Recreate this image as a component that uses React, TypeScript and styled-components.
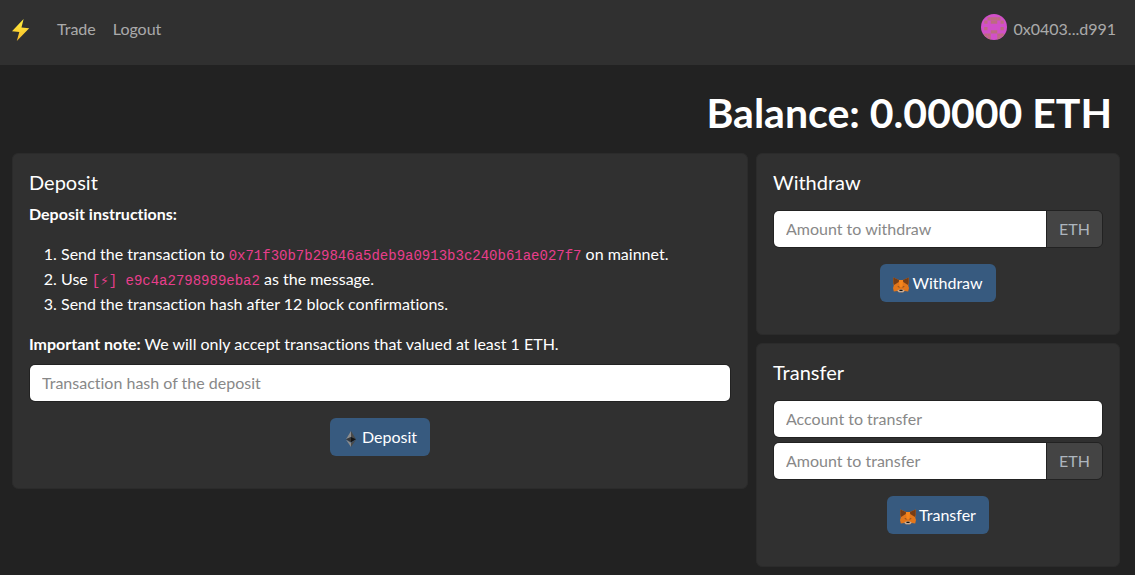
import React, { useId } from 'react';
import styled, { createGlobalStyle } from 'styled-components';

const GlobalStyle = createGlobalStyle`
  *, *::before, *::after { box-sizing: border-box; }
  body {
    margin: 0;
    background: #222;
    color: #fff;
    font-family: Lato, "Liberation Sans", sans-serif;
    font-size: 16px;
    font-variant-ligatures: none;
    line-height: 24px;
  }
`;

const Navbar = styled.nav`
  display: flex;
  align-items: flex-start;
  gap: 27px;
  min-height: 65px;
  padding: 16px 19px 16px 12px;
  background: #303030;
`;

const Brand = styled.a`
  display: flex;
  padding-top: 2px;
  text-decoration: none;
`;

const NavLinks = styled.div`
  display: flex;
  flex: 1;
  gap: 17px;
`;

const NavLink = styled.a`
  color: rgba(255, 255, 255, 0.6);
  line-height: 26px;
  text-decoration: none;
`;

const Account = styled(NavLink)`
  display: flex;
  gap: 7px;

  svg { margin-top: -2px; }
`;

const Page = styled.main`
  padding: 24px 11px 8px 8px;
`;

const Balance = styled.h1`
  margin: 0 12px 16px 0;
  font-size: 41px;
  font-weight: 700;
  line-height: 48px;
  text-align: right;
`;

const Columns = styled.div`
  display: grid;
  grid-template-columns: minmax(0, 2fr) minmax(0, 1fr);
  align-items: start;
`;

const Column = styled.div`
  display: flex;
  flex-direction: column;
  gap: 8px;
  padding: 0 4px;
`;

const Card = styled.section`
  padding: 16px 16px 32px;
  border: 1px solid #2b2b2b;
  border-radius: 6px;
  background: #303030;
`;

const CardTitle = styled.h2`
  margin: 0 0 8px;
  font-size: 20px;
  font-weight: 400;
  line-height: 24px;
`;

const Text = styled.p`
  margin: 0;
`;

const Steps = styled.ol`
  margin: 15px 0 16px;
  padding-left: 32px;
  line-height: 25px;
`;

const Code = styled.code`
  color: #e83e8c;
  font-family: "Liberation Mono", monospace;
  font-size: 14px;
  line-height: 16px;
`;

const Form = styled.form`
  display: flex;
  flex-direction: column;
  gap: 4px;
  padding-top: 8px;
`;

const Field = styled.div`
  display: flex;
  overflow: hidden;
  border: 1px solid #222;
  border-radius: 6px;
`;

const Input = styled.input`
  flex: 1;
  min-width: 0;
  height: 36px;
  padding: 0 12px 2px;
  border: 0;
  background: #fff;
  color: #303030;
  font: inherit;
  font-variant-ligatures: none;

  &::placeholder { color: #888; opacity: 1; }
`;

const Unit = styled.label`
  padding: 6px 12px;
  border-left: 1px solid #222;
  background: #444;
  color: #adb5bd;
`;

const Button = styled.button`
  display: flex;
  align-items: center;
  align-self: center;
  gap: 3px;
  height: 38px;
  margin-top: 12px;
  padding: 0 13px;
  border: 0;
  border-radius: 6px;
  background: #375a7f;
  color: #fff;
  font: inherit;
  font-variant-ligatures: none;

  svg { margin-top: 4px; }
`;

const Bolt = () => (
  <svg width="18" height="24" viewBox="0 0 18 24" aria-hidden="true">
    <defs>
      <linearGradient id="bolt" x1="0" y1="0" x2="0" y2="1">
        <stop offset="0" stopColor="#fff23e" />
        <stop offset="1" stopColor="#f9b92a" />
      </linearGradient>
    </defs>
    <path d="M11.600 1 0 13.200 7.300 13.900 4.800 23 17.200 10.300 9.500 9.600Z" fill="url(#bolt)" />
  </svg>
);

const identicon = [
  '........',
  '..BBBB..',
  '.B.BB.B.',
  '........',
  '.B....B.',
  '...BB...',
  '.BB..BB.',
  '..B..B..',
];

const Avatar = () => (
  <svg width="26" height="26" viewBox="0 0 8 8" aria-hidden="true">
    <clipPath id="avatar"><circle cx="4" cy="4" r="4" /></clipPath>
    <g clipPath="url(#avatar)">
      <rect width="8" height="8" fill="#d150c8" />
      {identicon.flatMap((row, y) =>
        [...row].map((cell, x) =>
          cell === 'B' ? <rect key={`${x}-${y}`} x={x} y={y} width="1" height="1" fill="#bd6b80" /> : null,
        ),
      )}
    </g>
  </svg>
);

const Ether = () => (
  <svg width="16" height="16" viewBox="0 0 16 16" aria-hidden="true">
    <path d="M8 0 3 8.200 8 6Z" fill="#8c8c8c" />
    <path d="M8 0 13 8.200 8 6Z" fill="#4a4a49" />
    <path d="M3 8.200 8 6V11.200Z" fill="#393939" />
    <path d="M13 8.200 8 6V11.200Z" fill="#141414" />
    <path d="M3 8.700 8 11.700V16Z" fill="#8c8c8c" />
    <path d="M13 8.700 8 11.700V16Z" fill="#4a4a49" />
  </svg>
);

const Fox = () => (
  <svg width="16" height="16" viewBox="0 0 16 16" aria-hidden="true">
    <path d="M.3.600 6 3h4L15.700.600V6l-.5 2.500.8 2.500-.8 3.500-3.400-.6-1.600 1.400H5.800l-1.600-1.400-3.400.6L0 11l.8-2.500L.3 6Z" fill="#e2761b" />
    <path d="M.3.600 6 3 5.800 5 1 8 .3 6Z" fill="#763d16" />
    <path d="M15.700.6 10 3l.2 2L15 8l.7-2Z" fill="#763d16" />
    <path d="M6 3h4l-.5 7h-3Z" fill="#f6851b" />
    <path d="m4.200 9.400 2 .1.300 1.200Zm7.600 0-2 .1-.3 1.200Z" fill="#5b3a26" />
    <path d="m4.300 13.200 2.100-.7h3.200l2.100.7-1.500 2.100H5.800Z" fill="#c0ad9e" />
    <path d="M6.600 12.700h2.800l.3 1.300H6.300Z" fill="#161616" />
  </svg>
);

type TextFieldProps = { placeholder: string; unit?: string };

const TextField = ({ placeholder, unit }: TextFieldProps) => {
  const id = useId();
  return (
    <Field>
      <Input id={id} type="text" placeholder={placeholder} aria-label={placeholder} />
      {unit && <Unit htmlFor={id}>{unit}</Unit>}
    </Field>
  );
};

export default function App() {
  return (
    <>
      <GlobalStyle />
      <Navbar>
        <Brand href="#" aria-label="Home"><Bolt /></Brand>
        <NavLinks>
          <NavLink href="#trade">Trade</NavLink>
          <NavLink href="#logout">Logout</NavLink>
        </NavLinks>
        <Account href="#account"><Avatar />0x0403...d991</Account>
      </Navbar>
      <Page>
        <Balance>Balance: 0.00000 ETH</Balance>
        <Columns>
          <Column>
            <Card>
              <CardTitle>Deposit</CardTitle>
              <Text><strong>Deposit instructions:</strong></Text>
              <Steps>
                <li>Send the transaction to <Code>0x71f30b7b29846a5deb9a0913b3c240b61ae027f7</Code> on mainnet.</li>
                <li>Use <Code>[⚡︎] e9c4a2798989eba2</Code> as the message.</li>
                <li>Send the transaction hash after 12 block confirmations.</li>
              </Steps>
              <Text><strong>Important note:</strong> We will only accept transactions that valued at least 1 ETH.</Text>
              <Form>
                <TextField placeholder="Transaction hash of the deposit" />
                <Button type="button"><Ether />Deposit</Button>
              </Form>
            </Card>
          </Column>
          <Column>
            <Card>
              <CardTitle>Withdraw</CardTitle>
              <Form>
                <TextField placeholder="Amount to withdraw" unit="ETH" />
                <Button type="button"><Fox />Withdraw</Button>
              </Form>
            </Card>
            <Card>
              <CardTitle>Transfer</CardTitle>
              <Form>
                <TextField placeholder="Account to transfer" />
                <TextField placeholder="Amount to transfer" unit="ETH" />
                <Button type="button"><Fox />Transfer</Button>
              </Form>
            </Card>
          </Column>
        </Columns>
      </Page>
    </>
  );
}
